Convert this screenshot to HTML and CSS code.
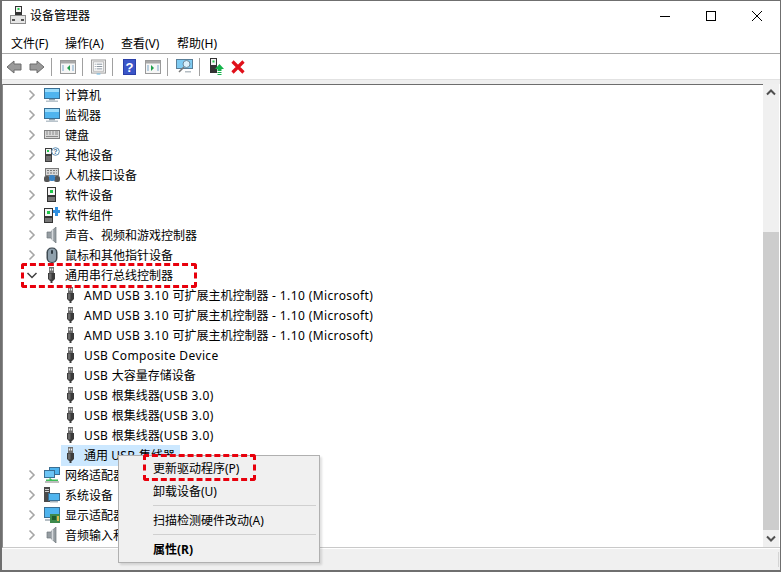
FILE: index.html
```html
<!DOCTYPE html>
<html lang="zh-CN">
<head>
<meta charset="utf-8">
<title>设备管理器</title>
<link rel="stylesheet" href="styles.css">
</head>
<body>
<svg class="defs" xmlns="http://www.w3.org/2000/svg">
  <symbol id="i-chev-r" viewBox="0 0 12 12"><path d="M3.500 1.500 8 6 3.500 10.500" fill="none" stroke="#a6a6a6" stroke-width="1.600"/></symbol>
  <symbol id="i-chev-d" viewBox="0 0 12 12"><path d="M1.500 4 6 8.500 10.500 4" fill="none" stroke="#404040" stroke-width="1.500"/></symbol>
  <symbol id="i-monitor" viewBox="0 0 16 16"><rect x="0.500" y="1.500" width="15" height="10" fill="#4fb4ee" stroke="#3a6f94"/><rect x="1" y="2" width="14" height="3" fill="#9bdcfb"/><rect x="5" y="12" width="6" height="1.500" fill="#8fa3b0"/><rect x="2" y="13.500" width="12" height="1.500" fill="#b9c4cc"/></symbol>
  <symbol id="i-display" viewBox="0 0 16 16"><rect x="0.500" y="3.500" width="15" height="8" fill="#d8d8d8" stroke="#808080"/><path d="M2 5h2M5 5h2M8 5h2M11 5h3M2 7h2M5 7h2M8 7h2M11 7h3M2 9.500h12" stroke="#8a8a8a"/></symbol>
  <symbol id="i-other" viewBox="0 0 16 16"><path d="M1 1h7v14H1z" fill="#3d3d3d"/><rect x="2" y="2" width="5" height="5" fill="#f4f4f4"/><rect x="3" y="3" width="2" height="2" fill="#22c34a"/><rect x="2" y="9" width="5" height="5" fill="#707070"/><circle cx="11.500" cy="4.500" r="3.800" fill="#fff" stroke="#5f8fb5"/><text class="qm" x="11.500" y="7">?</text></symbol>
  <symbol id="i-hid" viewBox="0 0 16 16"><rect x="1.500" y="1.500" width="13" height="7" fill="#d9d9d9" stroke="#7a7a7a"/><path d="M3 3.500h2M6 3.500h2M9 3.500h2M12 3.500h1M3 6h2M6 6h2M9 6h2M12 6h1" stroke="#777"/><rect x="0" y="9" width="6" height="6" rx="2" fill="#555"/><rect x="10" y="9" width="6" height="6" rx="2" fill="#555"/><rect x="5" y="8" width="6" height="6" rx="2" fill="#3a83c4"/></symbol>
  <symbol id="i-soft" viewBox="0 0 16 16"><rect x="3" y="0" width="9" height="15" fill="#333"/><rect x="4" y="1" width="7" height="7" fill="#f5f5f5"/><rect x="6" y="3" width="3" height="3" fill="#1ec64a"/><rect x="4" y="10" width="7" height="4" fill="#777"/></symbol>
  <symbol id="i-comp" viewBox="0 0 16 16"><rect x="0" y="1" width="9" height="15" fill="#333"/><rect x="1" y="2" width="7" height="7" fill="#f5f5f5"/><rect x="3" y="4" width="3" height="3" fill="#1ec64a"/><rect x="1" y="11" width="7" height="4" fill="#777"/><path d="M11 0h3v3h2v3h-2v3h-3V6H9V3h2z" fill="#2f8fe0"/></symbol>
  <symbol id="i-audio" viewBox="0 0 16 16"><path d="M3 5h3.500L12 0v16l-5.500-5H3z" fill="#969da2" stroke="#6f767b" stroke-width="0.700"/><path d="M8.500 2.500v11" stroke="#d5d9dc" stroke-width="1.500"/></symbol>
  <symbol id="i-mouse" viewBox="0 0 16 16"><rect x="2.500" y="0.500" width="11" height="15.500" rx="5" fill="#3f4a52"/><rect x="4" y="1.500" width="8" height="13.500" rx="4" fill="#8fa0ac"/><rect x="7" y="3" width="2" height="4" rx="1" fill="#2f3a42"/></symbol>
  <symbol id="i-usb" viewBox="0 0 16 16"><rect x="5" y="0" width="5" height="6" fill="#6e6e6e"/><rect x="5.800" y="1.500" width="1.300" height="2" fill="#f2f2f2"/><rect x="7.900" y="1.500" width="1.300" height="2" fill="#f2f2f2"/><path d="M4 6h7v6l-2 2H6l-2-2z" fill="#3b3b3b"/><rect x="5" y="6.500" width="2.500" height="6" fill="#6a6a6a"/><rect x="6.500" y="14" width="2" height="2" fill="#3b3b3b"/></symbol>
  <symbol id="i-net" viewBox="0 0 16 16"><rect x="5.500" y="0.500" width="10" height="7" fill="#4fb4ee" stroke="#3a6f94"/><rect x="0.500" y="3.500" width="10" height="7" fill="#6cc5f5" stroke="#3a6f94"/><path d="M5.500 10.500v2H2v2h12v-2H8" fill="#3fbf5a"/><rect x="1" y="14" width="14" height="2" fill="#bdbdbd"/></symbol>
  <symbol id="i-sys" viewBox="0 0 16 16"><rect x="0" y="0" width="6" height="15" fill="#4a4a4a"/><rect x="1" y="2" width="4" height="1" fill="#cfcfcf"/><rect x="1" y="4" width="4" height="1" fill="#cfcfcf"/><rect x="4.500" y="6.500" width="11" height="7" fill="#4fb4ee" stroke="#3a6f94"/><rect x="6" y="14" width="8" height="1.500" fill="#a9b5bd"/></symbol>
  <symbol id="i-gpu" viewBox="0 0 16 16"><rect x="0.500" y="0.500" width="15" height="10" fill="#4fb4ee" stroke="#3a6f94"/><rect x="1" y="12" width="7" height="2" fill="#b5bec4"/><rect x="6" y="7" width="10" height="9" fill="#3e8a4c"/><rect x="8" y="9" width="4" height="4" fill="#1f5b2c"/><rect x="13" y="9" width="2" height="5" fill="#d7b84a"/></symbol>
  <symbol id="i-app" viewBox="0 0 16 19"><rect x="5" y="0" width="7" height="9" fill="#333"/><rect x="6" y="1" width="5" height="5" fill="#f2f2f2"/><rect x="7.500" y="2" width="2" height="2" fill="#1ec64a"/><rect x="0" y="9" width="16" height="9" fill="#8c8c8c"/><rect x="1" y="10" width="14" height="7" fill="#e6e6e6"/><rect x="2" y="13" width="3" height="2" fill="#555"/><rect x="11" y="13" width="3" height="2" fill="#555"/></symbol>
  <symbol id="t-left" viewBox="0 0 16 16"><path d="M1 8 8 2v3h7v6H8v3z" fill="#9a9a9a" stroke="#6c6c6c"/></symbol>
  <symbol id="t-right" viewBox="0 0 16 16"><path d="M15 8 8 2v3H1v6h7v3z" fill="#9a9a9a" stroke="#6c6c6c"/></symbol>
  <symbol id="t-panel-l" viewBox="0 0 16 14"><rect x="0.500" y="0.500" width="15" height="13" fill="#f6f6f6" stroke="#9a9a9a"/><rect x="1" y="1" width="14" height="2.500" fill="#a8a8a8"/><path d="M2 6h2M2 8h2M2 10h2M12 6h2M12 8h2M12 10h2" stroke="#7aa7c9"/><path d="M10 5v6L7 8z" fill="#1e9e4a"/></symbol>
  <symbol id="t-panel-r" viewBox="0 0 16 14"><rect x="0.500" y="0.500" width="15" height="13" fill="#f6f6f6" stroke="#9a9a9a"/><rect x="1" y="1" width="14" height="2.500" fill="#a8a8a8"/><path d="M2 6h2M2 8h2M2 10h2M12 6h2M12 8h2M12 10h2" stroke="#7aa7c9"/><path d="M6 5v6l3-3z" fill="#1e9e4a"/></symbol>
  <symbol id="t-doc" viewBox="0 0 16 16"><rect x="0.500" y="0.500" width="15" height="14" fill="#f2f2f2" stroke="#9a9a9a"/><rect x="2.500" y="2.500" width="11" height="10" fill="#fff" stroke="#b5b5b5"/><path d="M4 5h1M6 5h6M4 7.500h1M6 7.500h6M4 10h1M6 10h6" stroke="#7f8c96"/><rect x="6" y="15" width="4" height="1" fill="#5fb4e6"/></symbol>
  <symbol id="t-help" viewBox="0 0 13 16"><rect width="13" height="16" fill="#2a3fa8"/><rect x="1" y="1" width="11" height="14" fill="#3a55c8"/><text class="hm" x="6.500" y="13">?</text></symbol>
  <symbol id="t-scan" viewBox="0 0 17 15"><rect x="0.500" y="0.500" width="16" height="9" fill="#7fcbf2" stroke="#5a7f99"/><circle cx="10.500" cy="5" r="3.500" fill="#d9f0fb" stroke="#6b8799"/><path d="M8 8 3 13" stroke="#7a7a7a" stroke-width="1.600"/><rect x="9" y="12" width="6" height="1.500" fill="#b5bec4"/></symbol>
  <symbol id="t-update" viewBox="0 0 14 17"><rect x="0" y="0" width="7" height="15" fill="#333"/><rect x="1" y="1" width="5" height="6" fill="#f2f2f2"/><rect x="2.500" y="2.500" width="2" height="2" fill="#1ec64a"/><path d="M9.500 6 14 11h-2.500v2h-4v-2H5z" fill="#14b34a"/><rect x="7.500" y="14" width="4" height="1" fill="#14b34a"/><rect x="7.500" y="16" width="4" height="1" fill="#14b34a"/></symbol>
  <symbol id="t-x" viewBox="0 0 14 14"><path d="M1.500 1.500 12.500 12.500M12.500 1.500 1.500 12.500" stroke="#e0101a" stroke-width="3.200"/></symbol>
</svg>

<div class="window">
  <header class="titlebar">
    <svg class="app-icon"><use href="#i-app"/></svg>
    <span class="title">设备管理器</span>
    <div class="caption">
      <svg class="cap" viewBox="0 0 46 30"><path d="M18 15.500h10" stroke="#000"/></svg>
      <svg class="cap" viewBox="0 0 46 30"><rect x="18.500" y="10.500" width="9" height="9" fill="none" stroke="#000"/></svg>
      <svg class="cap" viewBox="0 0 46 30"><path d="M18 10 28 20M28 10 18 20" stroke="#000"/></svg>
    </div>
  </header>

  <nav class="menubar">
    <span class="menu-item">文件(F)</span>
    <span class="menu-item">操作(A)</span>
    <span class="menu-item">查看(V)</span>
    <span class="menu-item">帮助(H)</span>
  </nav>

  <div class="toolbar">
    <svg class="tb tb-16"><use href="#t-left"/></svg>
    <svg class="tb tb-16 tb-next"><use href="#t-right"/></svg>
    <i class="tb-sep"></i>
    <svg class="tb tb-16"><use href="#t-panel-l"/></svg>
    <i class="tb-sep"></i>
    <svg class="tb tb-doc"><use href="#t-doc"/></svg>
    <i class="tb-sep"></i>
    <svg class="tb tb-help"><use href="#t-help"/></svg>
    <svg class="tb tb-16 tb-panel"><use href="#t-panel-r"/></svg>
    <i class="tb-sep"></i>
    <svg class="tb tb-scan"><use href="#t-scan"/></svg>
    <i class="tb-sep"></i>
    <svg class="tb tb-update"><use href="#t-update"/></svg>
    <svg class="tb tb-x"><use href="#t-x"/></svg>
  </div>

  <div class="strip"></div>

  <div class="content">
    <div class="tree">
      <div class="row"><svg class="chev"><use href="#i-chev-r"/></svg><svg class="ico"><use href="#i-monitor"/></svg><span>计算机</span></div>
      <div class="row"><svg class="chev"><use href="#i-chev-r"/></svg><svg class="ico"><use href="#i-monitor"/></svg><span>监视器</span></div>
      <div class="row"><svg class="chev"><use href="#i-chev-r"/></svg><svg class="ico"><use href="#i-display"/></svg><span>键盘</span></div>
      <div class="row"><svg class="chev"><use href="#i-chev-r"/></svg><svg class="ico"><use href="#i-other"/></svg><span>其他设备</span></div>
      <div class="row"><svg class="chev"><use href="#i-chev-r"/></svg><svg class="ico"><use href="#i-hid"/></svg><span>人机接口设备</span></div>
      <div class="row"><svg class="chev"><use href="#i-chev-r"/></svg><svg class="ico"><use href="#i-soft"/></svg><span>软件设备</span></div>
      <div class="row"><svg class="chev"><use href="#i-chev-r"/></svg><svg class="ico"><use href="#i-comp"/></svg><span>软件组件</span></div>
      <div class="row"><svg class="chev"><use href="#i-chev-r"/></svg><svg class="ico"><use href="#i-audio"/></svg><span>声音、视频和游戏控制器</span></div>
      <div class="row"><svg class="chev"><use href="#i-chev-r"/></svg><svg class="ico"><use href="#i-mouse"/></svg><span>鼠标和其他指针设备</span></div>
      <div class="row"><svg class="chev"><use href="#i-chev-d"/></svg><svg class="ico"><use href="#i-usb"/></svg><span>通用串行总线控制器</span></div>
      <div class="row child"><svg class="ico"><use href="#i-usb"/></svg><span><span class="lat">AMD USB 3.10 </span>可扩展主机控制器<span class="lat"> - 1.10 (Microsoft)</span></span></div>
      <div class="row child"><svg class="ico"><use href="#i-usb"/></svg><span><span class="lat">AMD USB 3.10 </span>可扩展主机控制器<span class="lat"> - 1.10 (Microsoft)</span></span></div>
      <div class="row child"><svg class="ico"><use href="#i-usb"/></svg><span><span class="lat">AMD USB 3.10 </span>可扩展主机控制器<span class="lat"> - 1.10 (Microsoft)</span></span></div>
      <div class="row child"><svg class="ico"><use href="#i-usb"/></svg><span class="lat">USB Composite Device</span></div>
      <div class="row child"><svg class="ico"><use href="#i-usb"/></svg><span><span class="lat">USB </span>大容量存储设备</span></div>
      <div class="row child"><svg class="ico"><use href="#i-usb"/></svg><span><span class="lat">USB </span>根集线器<span class="lat">(USB 3.0)</span></span></div>
      <div class="row child"><svg class="ico"><use href="#i-usb"/></svg><span><span class="lat">USB </span>根集线器<span class="lat">(USB 3.0)</span></span></div>
      <div class="row child"><svg class="ico"><use href="#i-usb"/></svg><span><span class="lat">USB </span>根集线器<span class="lat">(USB 3.0)</span></span></div>
      <div class="row child"><div class="selected"><svg class="ico"><use href="#i-usb"/></svg><span>通用 <span class="lat">USB </span>集线器</span></div></div>
      <div class="row"><svg class="chev"><use href="#i-chev-r"/></svg><svg class="ico"><use href="#i-net"/></svg><span>网络适配器</span></div>
      <div class="row"><svg class="chev"><use href="#i-chev-r"/></svg><svg class="ico"><use href="#i-sys"/></svg><span>系统设备</span></div>
      <div class="row"><svg class="chev"><use href="#i-chev-r"/></svg><svg class="ico"><use href="#i-gpu"/></svg><span>显示适配器</span></div>
      <div class="row"><svg class="chev"><use href="#i-chev-r"/></svg><svg class="ico"><use href="#i-audio"/></svg><span>音频输入和输出</span></div>
    </div>
    <div class="scrollbar">
      <svg class="sb-arrow" viewBox="0 0 16 16"><path d="M4 10 8 6l4 4" fill="none" stroke="#505050" stroke-width="2"/></svg>
      <div class="sb-track"><div class="sb-thumb"></div></div>
      <svg class="sb-arrow" viewBox="0 0 16 16"><path d="M4 6l4 4 4-4" fill="none" stroke="#505050" stroke-width="2"/></svg>
    </div>
  </div>

  <footer class="status"><i class="status-cell"></i></footer>

  <div class="context-menu">
    <div class="cm-item">更新驱动程序(P)</div>
    <div class="cm-item">卸载设备(U)</div>
    <div class="cm-sep"></div>
    <div class="cm-item">扫描检测硬件改动(A)</div>
    <div class="cm-sep"></div>
    <div class="cm-item cm-bold">属性(R)</div>
  </div>

  <div class="mark mark-tree"></div>
  <div class="mark mark-menu"></div>
</div>
</body>
</html>
```

FILE: styles.css
```css
* { box-sizing: border-box; }
html, body { margin: 0; padding: 0; }
body {
  width: 781px;
  height: 572px;
  overflow: hidden;
  background: #fff;
  font-family: "Noto Sans", "Noto Sans CJK SC", sans-serif;
  font-size: 12px;
  color: #000;
}
.defs { display: none; }
.qm { font: bold 7px "Liberation Sans", sans-serif; fill: #3a6f94; text-anchor: middle; }
.hm { font: bold 13px "Liberation Sans", sans-serif; fill: #fff; text-anchor: middle; }
.lat { letter-spacing: 0.38px; white-space: pre; }

.window {
  position: relative;
  width: 781px;
  height: 572px;
  display: flex;
  flex-direction: column;
  background: #fff;
  border: 2px solid #6f6f6f;
  border-top-width: 1px;
  border-right-width: 1px;
}

.titlebar { height: 29px; display: flex; align-items: center; padding-left: 8px; flex: none; }
.app-icon { width: 16px; height: 19px; flex: none; }
.title { margin: 0 0 2px 4px; font-size: 12px; }
.caption { margin-left: auto; display: flex; }
.cap { width: 46px; height: 30px; display: block; }

.menubar { height: 24px; flex: none; display: flex; align-items: center; border-bottom: 1px solid #a8a8a8; padding: 2px 0 0 9px; }
.menu-item { width: 56px; white-space: nowrap; }
.menu-item:first-child { width: 54px; }

.toolbar { height: 25px; flex: none; display: flex; align-items: center; padding-left: 4px; }
.tb { display: block; flex: none; }
.tb-16 { width: 16px; height: 16px; }
.tb-next { margin-left: 7px; }
.tb-sep { width: 1px; height: 18px; background: #a0a0a0; margin: 0 8px 0 6px; flex: none; }
.tb-doc { width: 15px; height: 16px; }
.tb-help { width: 13px; height: 16px; margin-left: 2px; }
.tb-panel { margin-left: 9px; }
.tb-scan { width: 17px; height: 15px; }
.tb-update { width: 14px; height: 17px; margin-left: 2px; }
.tb-x { width: 14px; height: 14px; margin-left: 7px; }

.strip { height: 5px; flex: none; background: #efefef; border-top: 1px solid #e2e2e2; }

.content { flex: 1; display: flex; min-height: 0; border-left: 1px solid #8a8a8a; border-bottom: 1px solid #c9c9c9; }
.tree { flex: 1; border-top: 1px solid #6d6d6d; overflow: hidden; }
.row { height: 20px; display: flex; align-items: center; padding-left: 23px; white-space: nowrap; }
.row.child { padding-left: 60px; }
.chev { width: 12px; height: 12px; margin-right: 6px; flex: none; }
.ico { width: 16px; height: 16px; margin-right: 5px; flex: none; }
.selected { display: flex; align-items: center; height: 21px; margin-left: -2px; padding-left: 2px; width: 119px; background: #cce8ff; }

.scrollbar { width: 16px; flex: none; display: flex; flex-direction: column; background: #f0f0f0; margin-right: 1px; }
.sb-arrow { width: 16px; height: 17px; flex: none; display: block; }
.sb-track { flex: 1; display: flex; flex-direction: column; justify-content: flex-end; }
.sb-thumb { height: 298px; background: #cdcdcd; }

.status { height: 22px; flex: none; background: #f0f0f0; display: flex; justify-content: flex-end; padding: 3px 1px 3px 0; border-top: 1px solid #fff; }
.status-cell { width: 1px; background: #d4d4d4; }

.context-menu {
  position: absolute;
  left: 116px;
  top: 454px;
  width: 202px;
  height: 108px;
  background: #f0f0f0;
  border: 1px solid #b0b0b0;
  padding: 1px 2px;
  box-shadow: 2px 2px 2px rgba(0, 0, 0, 0.12);
}
.cm-item { height: 23px; line-height: 23px; padding-left: 32px; white-space: nowrap; }
.cm-sep { height: 1px; background: #d0d0d0; margin: 2px 1px 3px 32px; }
.cm-bold { font-weight: 700; }

.mark { position: absolute; border: 3px dashed #e8000c; border-radius: 3px; }
.mark-tree { left: 19px; top: 262px; width: 176px; height: 25px; }
.mark-menu { left: 141px; top: 453px; width: 113px; height: 27px; }
```
